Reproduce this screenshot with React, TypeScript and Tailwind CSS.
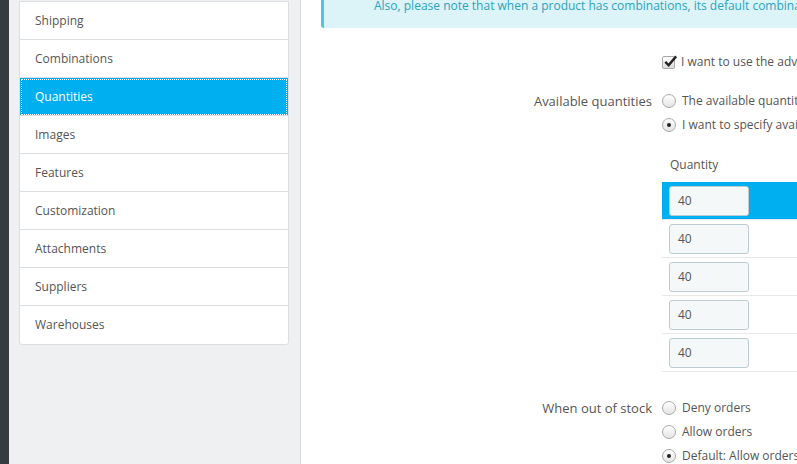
import React from "react";

const MENU = [
  "Shipping",
  "Combinations",
  "Quantities",
  "Images",
  "Features",
  "Customization",
  "Attachments",
  "Suppliers",
  "Warehouses",
];

function Radio({ checked = false }: { checked?: boolean }) {
  return (
    <span className="mr-[6px] flex h-[14px] w-[14px] shrink-0 items-center justify-center rounded-full border border-[#a9a9a9] bg-gradient-to-b from-white to-[#e4e4e4]">
      {checked && <span className="h-[4px] w-[4px] rounded-full bg-[#222]" />}
    </span>
  );
}

function Checkbox() {
  return (
    <span className="relative mr-[6px] h-[13px] w-[13px] shrink-0 rounded-[2px] border border-[#a9a9a9] bg-gradient-to-b from-white to-[#dcdcdc]">
      <svg viewBox="0 0 16 16" className="absolute left-[0px] top-[-3px] h-[15px] w-[15px]">
        <path d="M2.5 8.5 L6 12 L14 2.5" fill="none" stroke="#222" strokeWidth="2.6" />
      </svg>
    </span>
  );
}

function Option({ children, checked }: { children: React.ReactNode; checked?: boolean }) {
  return (
    <div className="flex h-[24px] items-center whitespace-nowrap">
      <Radio checked={checked} />
      <span>{children}</span>
    </div>
  );
}

export default function App() {
  return (
    <div
      className="flex h-[464px] w-[797px] overflow-hidden bg-white text-[12px] text-[#555]"
      style={{ fontFamily: '"Open Sans", "Noto Sans", sans-serif' }}
    >
      <div className="w-[9px] shrink-0 bg-[#363a41]" />

      <aside className="w-[292px] shrink-0 border-r border-[#d3d8db] bg-[#eff0f2] pl-[10px] pt-[1px]">
        <ul className="w-[270px] rounded-b-[3px] border border-[#dcdfe2] bg-white">
          {MENU.map((item) => {
            const active = item === "Quantities";
            return (
              <li
                key={item}
                className={`flex h-[38px] items-center border-b border-[#dcdfe2] pl-[15px] last:border-b-0 ${
                  active ? "bg-[#00aff0] text-white outline-1 outline-offset-[-2px] outline-dotted outline-white" : ""
                }`}
              >
                {item}
              </li>
            );
          })}
        </ul>
      </aside>

      <main className="min-w-0 flex-1 overflow-hidden">
        <div className="ml-[20px] mt-[-20px] h-[48px] w-[700px] rounded-[3px] border-l-[3px] border-[#4cc6df] bg-[#dcf3f8] pl-[50px] pt-[17px] whitespace-nowrap text-[12px] text-[#2aa3bd]">
          Also, please note that when a product has combinations, its default combination will be used for quantities.
        </div>

        <div className="mt-[22px] flex">
          <div className="w-[351px] shrink-0" />
          <div className="ml-[10px] flex h-[24px] items-center whitespace-nowrap">
            <Checkbox />
            <span>I want to use the advanced stock management system for this product.</span>
          </div>
        </div>

        <div className="mt-[15px] flex">
          <div className="h-[24px] w-[351px] shrink-0 text-right text-[13px] leading-[24px]">Available quantities</div>
          <div className="ml-[10px]">
            <Option>The available quantities for the current product and its combinations are based on the stock in your warehouse.</Option>
            <Option checked>I want to specify available quantities manually.</Option>
          </div>
        </div>

        <div className="mt-[16px] flex">
          <div className="w-[351px] shrink-0" />
          <div className="ml-[10px] w-[400px]">
            <div className="h-[29px] pl-[8px] leading-[24px]">Quantity</div>
            {[0, 1, 2, 3, 4].map((i) => (
              <div
                key={i}
                className={`flex h-[38px] items-center border-b border-[#e6e8ea] pl-[7px] ${i === 0 ? "bg-[#00aff0]" : ""}`}
              >
                <div className="flex h-[30px] w-[80px] items-center rounded-[3px] border border-[#bbcdd2] bg-[#f5f8f9] pl-[8px] text-[#555]">
                  40
                </div>
              </div>
            ))}
          </div>
        </div>

        <div className="mt-[24px] flex">
          <div className="h-[24px] w-[351px] shrink-0 text-right text-[13px] leading-[24px]">When out of stock</div>
          <div className="ml-[10px]">
            <Option>Deny orders</Option>
            <Option>Allow orders</Option>
            <Option checked>Default: Allow orders as set in the Products Preferences page</Option>
          </div>
        </div>
      </main>
    </div>
  );
}
